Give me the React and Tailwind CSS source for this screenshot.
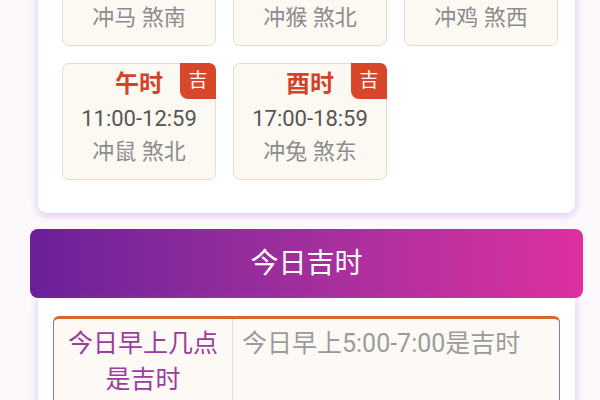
import React from "react";

const rows = [
  { name: "子时", time: "23:00-00:59", chong: "冲马 煞南", ji: false },
  { name: "寅时", time: "03:00-04:59", chong: "冲猴 煞北", ji: false },
  { name: "卯时", time: "05:00-06:59", chong: "冲鸡 煞西", ji: false },
  { name: "午时", time: "11:00-12:59", chong: "冲鼠 煞北", ji: true },
  { name: "酉时", time: "17:00-18:59", chong: "冲兔 煞东", ji: true },
];

function Card({ item }) {
  return (
    <div className="relative h-[117px] rounded-[7px] border border-[#e6dccb] bg-[#fcf9f3] pt-[2px] text-center">
      {item.ji && (
        <div className="absolute right-[-1px] top-[-1px] flex h-[36px] w-[36px] items-center justify-center rounded-bl-[8px] rounded-tr-[7px] bg-[#d9472b] text-[19px] text-white">
          吉
        </div>
      )}
      <div className="text-[24px] font-bold leading-[36px] text-[#d1432b]">{item.name}</div>
      <div className="text-[22px] leading-[34px] text-[#555555]">{item.time}</div>
      <div className="text-[22px] leading-[32px] text-[#8c8c8c]">{item.chong}</div>
    </div>
  );
}

export default function App() {
  return (
    <div
      className="h-[400px] w-[600px] overflow-hidden bg-[#fcf8fc]"
      style={{ fontFamily: 'Roboto, "Noto Sans CJK SC", sans-serif' }}
    >
      <div className="ml-[38px] mt-[-87px] w-[537px] rounded-b-[9px] bg-white pb-[33px] pl-[24px] pr-[17px] pt-[16px] shadow-[0_2px_8px_rgba(150,100,210,0.35)]">
        <div className="grid grid-cols-[154px_154px_154px] gap-[17px]">
          {rows.map((r) => (
            <Card key={r.name} item={r} />
          ))}
        </div>
      </div>

      <div className="ml-[30px] mt-[16px] flex h-[69px] w-[553px] items-center justify-center rounded-[8px] bg-gradient-to-r from-[#6a2099] to-[#de309f] text-[28px] text-white">
        今日吉时
      </div>

      <div className="ml-[38px] w-[537px] bg-white px-[15px] pt-[18px] pb-[40px] shadow-[0_2px_8px_rgba(150,100,210,0.35)]">
        <div className="flex rounded-[6px] border-x border-t-[3px] border-x-[#8a78a8] border-t-[#d8662c] bg-[#fdfaf6]">
          <div className="w-[179px] shrink-0 border-r border-[#e4ddd4] px-[10px] pt-[7px] pb-[10px] text-center text-[25px] leading-[36px] text-[#9a3d9e]">
            今日早上几点是吉时
          </div>
          <div className="px-[9px] pt-[7px] text-[25px] leading-[36px] text-[#9b9b9b]">
            今日早上5:00-7:00是吉时
          </div>
        </div>
      </div>
    </div>
  );
}
